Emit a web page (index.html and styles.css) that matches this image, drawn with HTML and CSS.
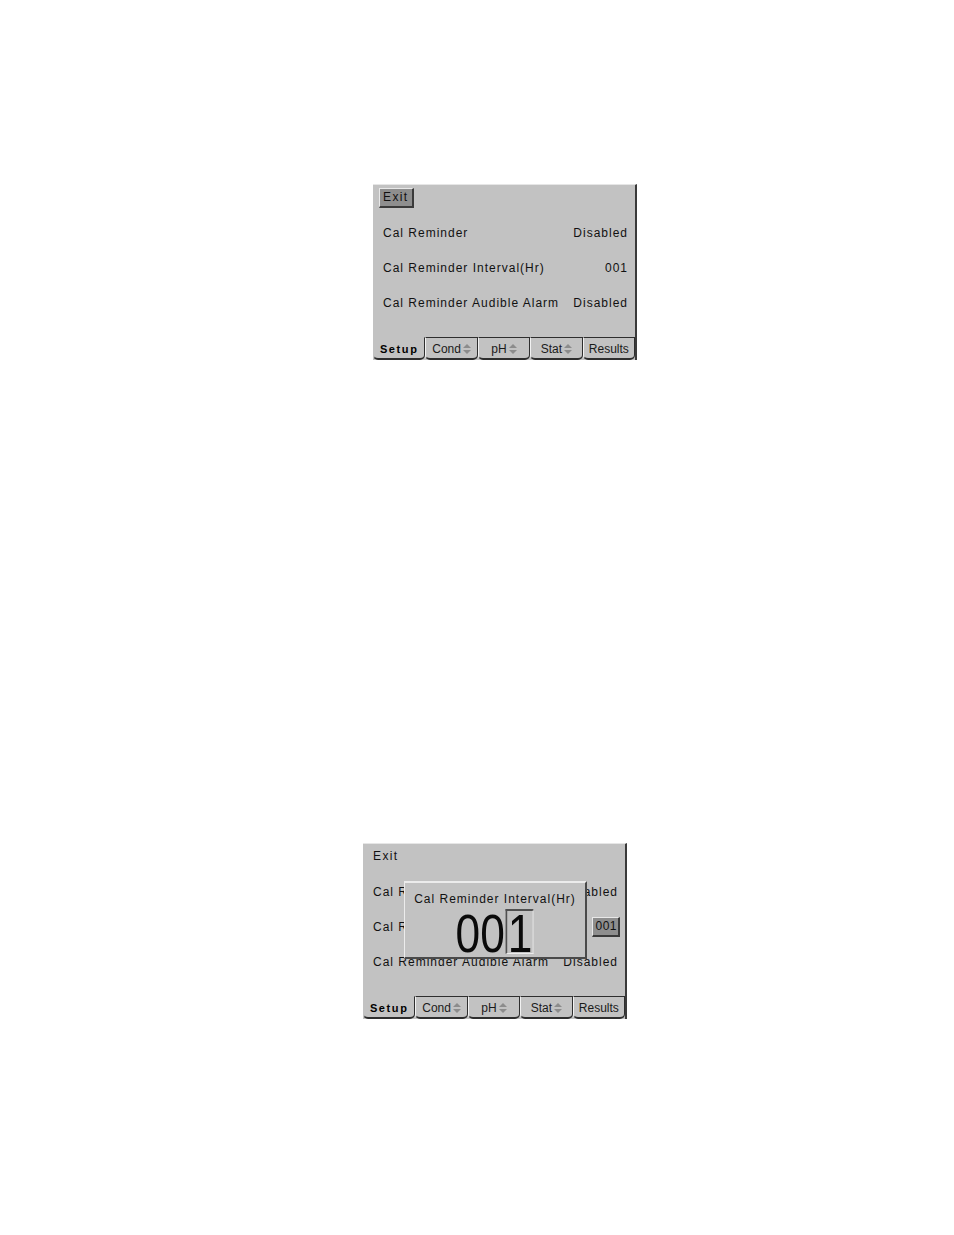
FILE: index.html
```html
<!DOCTYPE html>
<html>
<head>
<meta charset="utf-8">
<link rel="stylesheet" href="styles.css">
</head>
<body>
<div class="page">
  <div class="screen screen-a">
    <div class="content">
      <div class="exit-row"><span class="exit btn">Exit</span></div>
      <div class="rows">
        <div class="row"><span>Cal Reminder</span><span>Disabled</span></div>
        <div class="row"><span>Cal Reminder Interval(Hr)</span><span>001</span></div>
        <div class="row"><span>Cal Reminder Audible Alarm</span><span>Disabled</span></div>
      </div>
    </div>
    <div class="tabs">
      <div class="tab active">Setup</div>
      <div class="tab">Cond<svg class="arr" width="8" height="10" viewBox="0 0 8 10"><path d="M4 0 L8 4 L0 4 Z M0 6 L8 6 L4 10 Z"/></svg></div>
      <div class="tab">pH<svg class="arr" width="8" height="10" viewBox="0 0 8 10"><path d="M4 0 L8 4 L0 4 Z M0 6 L8 6 L4 10 Z"/></svg></div>
      <div class="tab">Stat<svg class="arr" width="8" height="10" viewBox="0 0 8 10"><path d="M4 0 L8 4 L0 4 Z M0 6 L8 6 L4 10 Z"/></svg></div>
      <div class="tab">Results</div>
    </div>
  </div>

  <div class="screen screen-b">
    <div class="content">
      <div class="exit-row"><span class="exit">Exit</span></div>
      <div class="rows">
        <div class="row"><span>Cal Reminder</span><span>Disabled</span></div>
        <div class="row"><span>Cal Reminder Interval(Hr)</span><span class="val btn">001</span></div>
        <div class="row"><span>Cal Reminder Audible Alarm</span><span>Disabled</span></div>
      </div>
    </div>
    <div class="tabs">
      <div class="tab active">Setup</div>
      <div class="tab">Cond<svg class="arr" width="8" height="10" viewBox="0 0 8 10"><path d="M4 0 L8 4 L0 4 Z M0 6 L8 6 L4 10 Z"/></svg></div>
      <div class="tab">pH<svg class="arr" width="8" height="10" viewBox="0 0 8 10"><path d="M4 0 L8 4 L0 4 Z M0 6 L8 6 L4 10 Z"/></svg></div>
      <div class="tab">Stat<svg class="arr" width="8" height="10" viewBox="0 0 8 10"><path d="M4 0 L8 4 L0 4 Z M0 6 L8 6 L4 10 Z"/></svg></div>
      <div class="tab">Results</div>
    </div>
    <div class="popup">
      <div class="popup-title">Cal Reminder Interval(Hr)</div>
      <div class="digits"><span class="pre">00</span><span class="cursor">1</span></div>
    </div>
  </div>
</div>
</body>
</html>
```

FILE: styles.css
```css
html, body {
  margin: 0;
  padding: 0;
  background: #ffffff;
}

.page {
  padding-top: 184px;
  display: flex;
  flex-direction: column;
}

.screen {
  position: relative;
  width: 262px;
  height: 175px;
  background: #c2c2c2;
  border-top: 1px solid #e6e6e6;
  border-right: 2px solid #3a3a3a;
  display: flex;
  flex-direction: column;
  font-family: "Liberation Sans", Arial, sans-serif;
  color: #111;
}

.screen-a { margin-left: 373px; }
.screen-b { margin-left: 363px; margin-top: 483px; }

.content {
  flex: 1;
  padding: 3px 7px 0 10px;
  display: flex;
  flex-direction: column;
}

.exit-row {
  height: 19px;
  display: flex;
  align-items: center;
}

.exit {
  font-size: 12px;
  letter-spacing: 1.4px;
  line-height: 15px;
  padding: 1px 3px 1px 3px;
  margin-left: -4px;
  border-style: solid;
  border-color: transparent;
  border-width: 1px 2px 2px 1px;
}

.btn {
  background: #8e8e8e;
  border-color: #e8e8e8 #3a3a3a #3a3a3a #e8e8e8;
  border-width: 1px 2px 2px 1px;
  border-style: solid;
}

.rows {
  margin-top: 8px;
  display: flex;
  flex-direction: column;
}

.row {
  height: 35px;
  display: flex;
  justify-content: space-between;
  align-items: center;
  font-size: 12px;
  letter-spacing: 1px;
}

.val {
  font-size: 12px;
  letter-spacing: 0.5px;
  padding: 1px 1px 1px 2px;
  margin-right: -2px;
  line-height: 15px;
}

.tabs {
  height: 23px;
  display: flex;
}

.tab {
  flex: 1;
  display: flex;
  align-items: center;
  justify-content: center;
  gap: 2px;
  font-size: 12px;
  color: #1a1a1a;
  border-top: 1px solid #2e2e2e;
  border-left: 1px solid #f2f2f2;
  border-right: 1px solid #2e2e2e;
  border-bottom: 2px solid #2e2e2e;
  border-radius: 0 0 5px 5px;
  box-sizing: border-box;
  padding-top: 1px;
}

.tab.active {
  border-top-color: #c2c2c2;
  border-left-color: #c2c2c2;
  font-weight: bold;
  font-size: 11px;
  letter-spacing: 1.6px;
  color: #000;
}

.arr {
  fill: #8c8c8c;
}

.popup {
  position: absolute;
  left: 41px;
  top: 37px;
  width: 180px;
  height: 74px;
  background: #c2c2c2;
  border-top: 2px solid #ececec;
  border-left: 1px solid #ececec;
  border-right: 2px solid #4a4a4a;
  border-bottom: 2px solid #4a4a4a;
  display: flex;
  flex-direction: column;
  align-items: center;
}

.popup-title {
  margin-top: 9px;
  font-size: 12px;
  letter-spacing: 1px;
  line-height: 14px;
}

.digits {
  display: flex;
  font-size: 54px;
  color: #0a0a0a;
  margin-top: 3px;
  margin-left: 0;
  transform: scaleX(0.82);
  transform-origin: center top;
}

.pre {
  display: block;
  height: 45px;
  line-height: 48.5px;
}

.cursor {
  display: block;
  width: 34px;
  height: 45px;
  line-height: 44.5px;
  box-sizing: border-box;
  border-top: 2px solid #505050;
  border-left: 2px solid #505050;
  border-right: 1px solid #ececec;
  border-bottom: 1px solid #ececec;
  text-align: center;
  margin-left: 1px;
}
```
